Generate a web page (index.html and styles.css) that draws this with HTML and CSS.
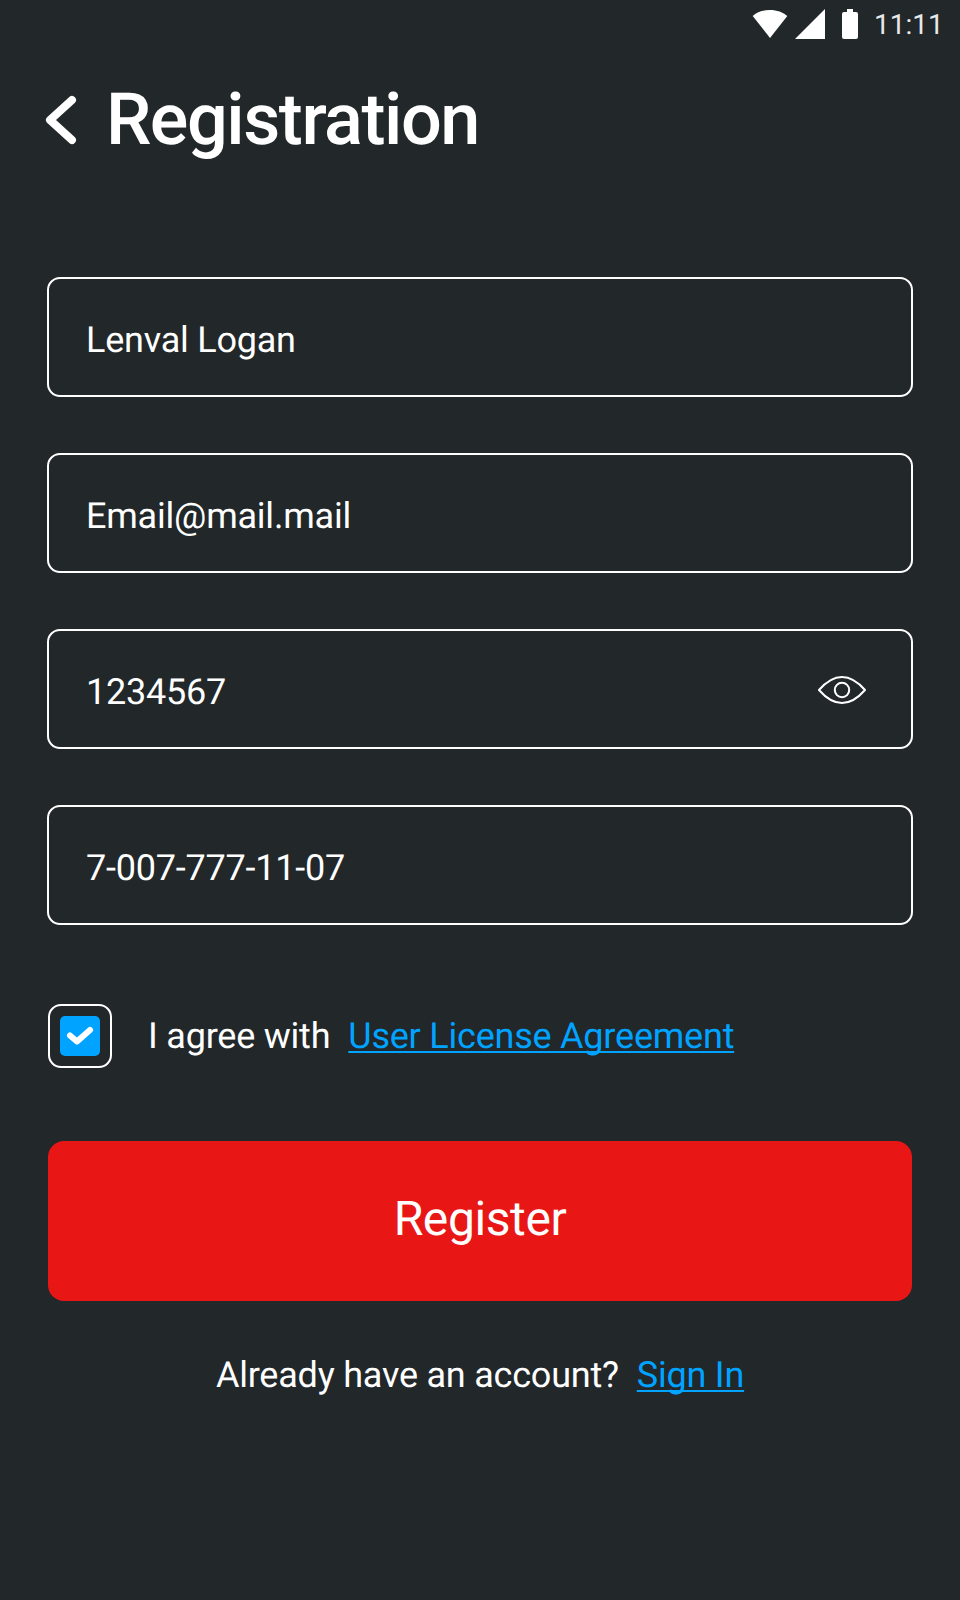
FILE: index.html
```html
<!DOCTYPE html>
<html lang="en">
<head>
<meta charset="utf-8">
<title>Registration</title>
<link rel="stylesheet" href="styles.css">
</head>
<body>
<div class="screen">
  <div class="status">
    <svg class="status-icons" width="110" height="32" viewBox="0 0 110 32">
      <path fill="#fff" d="M0.7 8C5 4.200 11 2 18 2s13 2.200 17.300 6L18 30z"/>
      <path fill="#fff" d="M43 31L73 1v30z"/>
      <path fill="#fff" d="M95 1h6v3h3q2 0 2 2v23q0 2-2 2H92q-2 0-2-2V6q0-2 2-2h3z"/>
    </svg>
    <span class="time">11:11</span>
  </div>
  <header class="header">
    <svg class="back" width="32" height="50" viewBox="0 0 32 50"><path d="M27 5L5 25l22 20" fill="none" stroke="#fff" stroke-width="8" stroke-linecap="round" stroke-linejoin="round"/></svg>
    <h1 class="title">Registration</h1>
  </header>
  <main class="form">
    <div class="field"><span class="value">Lenval Logan</span></div>
    <div class="field"><span class="value">Email@mail.mail</span></div>
    <div class="field"><span class="value">1234567</span>
      <svg class="eye" width="48" height="28" viewBox="0 0 48 28"><g fill="none" stroke="#fff" stroke-width="2"><path stroke-linejoin="round" d="M1 14C8 6 15.500 1 24 1s16 5 23 13C40 22 32.500 27 24 27S8 22 1 14z"/><circle cx="24" cy="14" r="7.200"/></g></svg>
    </div>
    <div class="field"><span class="value">7-007-777-11-07</span></div>
    <div class="agree">
      <span class="checkbox"><span class="tick"><svg width="40" height="40" viewBox="0 0 40 40"><path d="M10 19.500l7 6L30 14" fill="none" stroke="#fff" stroke-width="6" stroke-linecap="round" stroke-linejoin="round"/></svg></span></span>
      <span class="agree-text">I agree with</span>
      <a class="link">User License Agreement</a>
    </div>
    <button class="register">Register</button>
    <div class="signin"><span>Already have an account?</span><a class="link">Sign In</a></div>
  </main>
</div>
</body>
</html>
```
FILE: styles.css
```css
* { box-sizing: border-box; }
body {
  margin: 0;
  background: #222729;
  color: #fff;
  font-family: Roboto, sans-serif;
  font-size: 36px;
  letter-spacing: -0.22px;
  text-rendering: geometricPrecision;
}
.screen { width: 960px; height: 1600px; overflow: hidden; }
.status {
  display: flex;
  height: 48px;
  padding: 8px 0 0 752px;
}
.status-icons { flex: none; }
.time {
  margin-left: 12px;
  font-size: 28px;
  line-height: 33px;
  letter-spacing: 0;
  color: #e9e9ea;
}
.header {
  display: flex;
  align-items: center;
  height: 144px;
  padding-left: 45px;
}
.back { flex: none; }
.title {
  margin: 0 0 0 29px;
  font-size: 72px;
  font-weight: 500;
  line-height: 84px;
  letter-spacing: -1.45px;
}
.form { padding: 85px 47px 0; }
.field {
  display: flex;
  align-items: center;
  justify-content: space-between;
  height: 120px;
  margin-bottom: 56px;
  padding: 0 45px 0 37px;
  border: 2px solid #fff;
  border-radius: 13px;
}
.value { line-height: 42px; padding-top: 5px; }
.eye { flex: none; margin-top: 2px; }
.agree {
  display: flex;
  align-items: center;
  height: 64px;
  margin-top: 79px;
  padding-left: 1px;
}
.checkbox {
  display: flex;
  flex: none;
  align-items: center;
  justify-content: center;
  width: 64px;
  height: 64px;
  border: 2px solid #fff;
  border-radius: 13px;
}
.tick {
  display: flex;
  width: 40px;
  height: 40px;
  border-radius: 5px;
  background: #00a3ff;
}
.agree-text { margin: 0 18px 0 36px; }
.link {
  color: #00a3ff;
  text-decoration: underline;
  text-decoration-thickness: 2px;
  text-underline-offset: 3px;
  text-decoration-skip-ink: none;
}
.register {
  display: block;
  width: 864px;
  height: 160px;
  margin: 72.5px 1px 0;
  padding: 0 0 5px;
  border: 0;
  border-radius: 16px;
  background: #e91616;
  color: #fff;
  font: 48px Roboto, sans-serif;
  letter-spacing: -0.4px;
  text-rendering: geometricPrecision;
}
.signin {
  display: flex;
  justify-content: center;
  gap: 18px;
  margin-top: 53.5px;
  line-height: 42px;
}
```
